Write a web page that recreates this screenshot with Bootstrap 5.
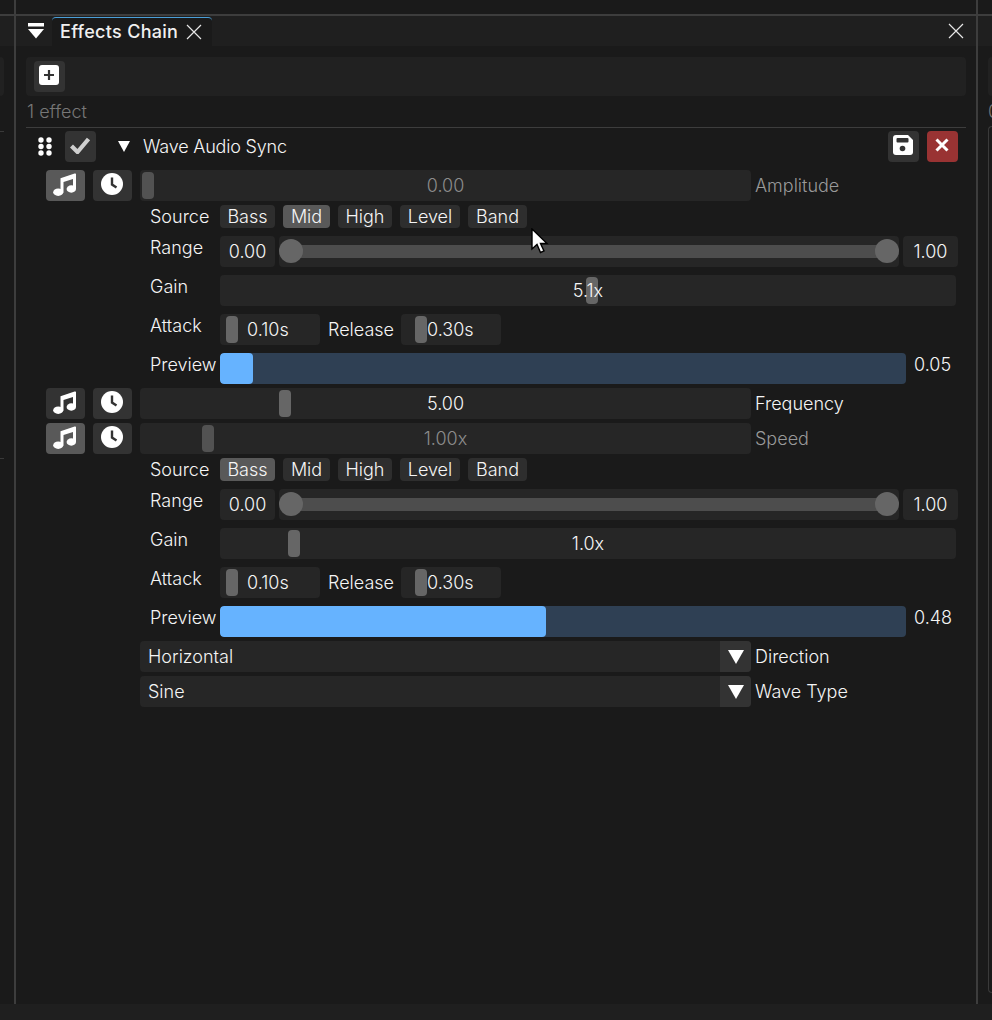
<!DOCTYPE html>
<html lang="en">
<head>
<meta charset="UTF-8">
<title>Effects Chain</title>
<link href="https://cdn.jsdelivr.net/npm/bootstrap@5.3.0/dist/css/bootstrap.min.css" rel="stylesheet">
<style>
html, body { background: #1a1a1a; }
body { font-family: Inter, "Liberation Sans", sans-serif; font-size: 18px; font-weight: 300; line-height: 22px; color: #f5f5f5; overflow: hidden; }
.shell { height: 1004px; }
.side-l { width: 14px; overflow: hidden; flex: none; }
.side-r { width: 14px; overflow: hidden; flex: none; }
.divider { width: 2px; background: #3d3d3d; flex: none; }
.center { width: 960px; flex: none; position: relative; }
.strip { height: 16px; border-bottom: 2px solid #3d3d3d; flex: none; }
.tabbar { height: 30px; background: #1f1f1f; flex: none; }
.foot { height: 16px; background: #1f1f1f; }
.side-tool { height: 39px; width: 4px; margin-top: 11px; background: #212121; border-radius: 0 4px 4px 0; }
.side-rule { height: 1px; width: 4px; background: #3a3a3a; margin-top: 35px; }
.side-rule2 { height: 1px; width: 4px; background: #3a3a3a; margin-top: 326px; }
.side-tool-r { height: 39px; width: 4px; margin-top: 11px; margin-left: 10px; background: #212121; border-radius: 4px 0 0 4px; }
.side-text { margin: 5px 0 0 10px; color: #777; white-space: nowrap; height: 22px; }
.side-box { margin: 3px 0 0 10px; height: 867px; border: 1px solid #3a3a3a; border-right: 0; border-radius: 4px 0 0 4px; }
.tab-menu { width: 16px; margin: 0 8px 0 12px; }
.tab-active { width: 160px; height: 30px; padding-left: 8px; background: #1a1a1a; border-top: 1px solid #4a9fd8; border-radius: 4px 4px 0 0; margin-top: 1px; font-weight: 500; color: #f0f0f0; letter-spacing: .3px; }
.tab-active span { width: 118px; white-space: nowrap; }
.tool-bar { height: 39px; margin: 11px 10px 0; padding: 4px 8px; background: #212121; border-radius: 4px; }
.count { color: #777; margin: 5px 0 0 11px; height: 22px; }
.rule-line { height: 1px; background: #3d3d3d; margin: 4px 10px 0; }
.fx-body { padding: 3px 10px 0; }
.fx-btn { width: 31px; height: 31px; padding: 0 2px 3px 0; border: 0; background: #333; display: flex; align-items: center; justify-content: center; }
.fx-btn:hover { background: #333; }
.fx-btn.danger, .fx-btn.danger:hover { background: #993333; }
.mod-btn { width: 39px; height: 31px; padding: 0 2px 3px 0; border: 0; background: #333; display: flex; align-items: center; justify-content: center; flex: none; }
.mod-btn:hover { background: #333; }
.mod-btn.on, .mod-btn.on:hover { background: #595959; }
.fx-head { height: 31px; }
.grip { width: 14px; margin-left: 12px; margin-right: 13px; }
.fold { margin: 0 13px 0 22px; }
.fx-name { letter-spacing: -.2px; }
.fx-row { height: 31px; margin-left: 20px; margin-top: 4px; gap: 8px; }
.sl { position: relative; background: #262626; border-radius: 4px; height: 31px; display: flex; align-items: center; justify-content: center; }
.sl-main { width: 611px; flex: none; }
.sl-label { margin-left: -4px; white-space: nowrap; }
.dim { color: #8c8c8c; }
.dim-label { color: #999; }
.knob { position: absolute; top: 2px; width: 12px; height: 27px; background: #666; border-radius: 4px; }
.knob.off { background: #525252; }
.sl span { position: relative; }
.sub { margin-left: 124px; margin-top: 8px; height: 31px; }
.sub.first { margin-top: 4px; height: 23px; align-items: center; }
.sub-label { width: 70px; flex: none; white-space: nowrap; padding-top: 1px; }
.src-btn { height: 23px; padding: 0; background: #2e2e2e; border: 0; border-radius: 4px; color: #f5f5f5; font-size: 18px; font-weight: 300; line-height: 24px; }
.src-btn:hover { background: #2e2e2e; color: #f5f5f5; }
.src-btn.on, .src-btn.on:hover { background: #595959; }
.w-bass { width: 55px; }
.w-mid { width: 47px; }
.w-high { width: 54px; }
.w-level { width: 60px; }
.w-band { width: 59px; }
.val-box { width: 55px; flex: none; padding: 0; }
.range-track { width: 620px; flex: none; margin: 0 4px; }
.range-fill { position: absolute; left: 12px; right: 12px; top: 9px; height: 13px; background: #4d4d4d; }
.range-dot { position: absolute; top: 3px; width: 24px; height: 24px; border-radius: 50%; background: #666; }
.gain { width: 736px; flex: none; }
.timing { width: 100px; flex: none; padding-left: 27px; justify-content: flex-start; }
.timing .knob { left: 6px; }
.timing.rel { padding-left: 26px; }
.timing.rel .knob { left: 14px; }
.rel-label { margin: 0 8px 0 8px; width: 65px; white-space: nowrap; padding-top: 5px; }
.meter { width: 686px; height: 31px; background: #2f4054; border-radius: 4px; overflow: hidden; flex: none; }
.meter-fill { height: 31px; background: #66b3ff; border-radius: 4px; }
.meter-val { margin-left: 8px; padding-top: 1px; }
.drop { width: 611px; height: 31px; background: #262626; border-radius: 4px; overflow: hidden; flex: none; padding-left: 8px; }
.drop-arrow { width: 31px; height: 31px; background: #333; margin-left: auto; }
.sel-row { margin-left: 114px; margin-top: 4px; height: 31px; gap: 4px; }
.cursor-mark { position: absolute; left: 515px; top: 228px; z-index: 5; }
</style>
</head>
<body>
<div class="shell d-flex">
  <div class="side-l d-flex flex-column">
    <div class="strip"></div>
    <div class="tabbar"></div>
    <div class="side-tool"></div>
    <div class="side-rule"></div>
    <div class="side-rule2"></div>
  </div>
  <div class="divider"></div>
  <div class="center d-flex flex-column">
    <div class="strip"></div>
    <div class="tabbar d-flex align-items-center">
      <svg class="tab-menu" viewBox="0 0 16 16" height="16"><rect x="0" y="0" width="16" height="3.5" fill="#fff"/><path d="M0 6h16l-8 9.5z" fill="#fff"/></svg>
      <div class="tab-active d-flex align-items-center">
        <span>Effects Chain</span>
        <svg class="ms-2" width="16" height="16" viewBox="0 0 16 16"><path d="M1 1l14 14M15 1L1 15" stroke="#e6e6e6" stroke-width="1.2"/></svg>
      </div>
      <svg class="ms-auto" style="margin-right:12px" width="16" height="16" viewBox="0 0 16 16"><path d="M1 1l14 14M15 1L1 15" stroke="#e6e6e6" stroke-width="1.2"/></svg>
    </div>
    <div class="tool-bar">
      <button class="btn fx-btn rounded-1" type="button" aria-label="Add effect">
        <svg width="20" height="20" viewBox="0 0 20 20"><rect width="20" height="20" rx="3" fill="#fff"/><path d="M10 5v10M5 10h10" stroke="#333" stroke-width="2.2"/></svg>
      </button>
    </div>
    <div class="count">1 effect</div>
    <div class="rule-line"></div>
    <div class="fx-body">
      <div class="fx-head d-flex align-items-center">
        <svg class="grip" width="14" height="19" viewBox="0 0 14 19" fill="#fff"><circle cx="3" cy="3" r="2.7"/><circle cx="11" cy="3" r="2.7"/><circle cx="3" cy="9.5" r="2.7"/><circle cx="11" cy="9.5" r="2.7"/><circle cx="3" cy="16" r="2.7"/><circle cx="11" cy="16" r="2.7"/></svg>
        <button class="btn fx-btn rounded-1" type="button" aria-label="Enabled">
          <svg width="22" height="18" viewBox="0 0 22 18"><path d="M2.5 10l6 6L19.5 3" fill="none" stroke="#cfcfcf" stroke-width="4.2"/></svg>
        </button>
        <svg class="fold" width="12" height="11" viewBox="0 0 12 11"><path d="M0 0h12L6 11z" fill="#fff"/></svg>
        <span class="fx-name">Wave Audio Sync</span>
        <button class="btn fx-btn rounded-1 ms-auto" type="button" aria-label="Save">
          <svg width="20" height="20" viewBox="0 0 20 20"><path d="M3 0h12l5 5v12a3 3 0 0 1-3 3H3a3 3 0 0 1-3-3V3a3 3 0 0 1 3-3z" fill="#fff"/><rect x="3.5" y="3" width="12" height="4.5" rx="1" fill="#333"/><circle cx="9.5" cy="13.5" r="2.8" fill="#333"/></svg>
        </button>
        <button class="btn fx-btn danger rounded-1" style="margin:0 8px" type="button" aria-label="Delete">
          <svg width="14" height="14" viewBox="0 0 14 14"><path d="M1.5 1.5l11 11M12.5 1.5l-11 11" stroke="#fff" stroke-width="3"/></svg>
        </button>
      </div>

      <div class="fx-row d-flex" style="margin-top:8px">
        <button class="btn mod-btn on rounded-1" type="button" aria-label="Audio"><svg width="23" height="23" viewBox="0 0 23 23"><use href="#i-music"/></svg></button>
        <button class="btn mod-btn rounded-1" type="button" aria-label="Time"><svg width="22" height="22" viewBox="0 0 22 22"><use href="#i-clock"/></svg></button>
        <div class="sl sl-main"><div class="knob off" style="left:2px"></div><span class="dim">0.00</span></div>
        <div class="sl-label align-self-center dim-label">Amplitude</div>
      </div>

      <div class="sub first d-flex">
        <div class="sub-label">Source</div>
        <div class="d-flex gap-2">
          <button class="btn src-btn w-bass" type="button">Bass</button>
          <button class="btn src-btn w-mid on" type="button">Mid</button>
          <button class="btn src-btn w-high" type="button">High</button>
          <button class="btn src-btn w-level" type="button">Level</button>
          <button class="btn src-btn w-band" type="button">Band</button>
        </div>
      </div>
      <div class="sub d-flex">
        <div class="sub-label">Range</div>
        <div class="sl val-box"><span>0.00</span></div>
        <div class="sl range-track"><div class="range-fill"></div><div class="range-dot" style="left:0"></div><div class="range-dot" style="right:0"></div></div>
        <div class="sl val-box"><span>1.00</span></div>
      </div>
      <div class="sub d-flex">
        <div class="sub-label">Gain</div>
        <div class="sl gain"><div class="knob" style="left:366px"></div><span>5.1x</span></div>
      </div>
      <div class="sub d-flex">
        <div class="sub-label">Attack</div>
        <div class="sl timing"><div class="knob"></div><span>0.10s</span></div>
        <div class="rel-label">Release</div>
        <div class="sl timing rel"><div class="knob"></div><span>0.30s</span></div>
      </div>
      <div class="sub d-flex">
        <div class="sub-label">Preview</div>
        <div class="meter"><div class="meter-fill" style="width:33px"></div></div>
        <div class="meter-val">0.05</div>
      </div>

      <div class="fx-row d-flex">
        <button class="btn mod-btn rounded-1" type="button" aria-label="Audio"><svg width="23" height="23" viewBox="0 0 23 23"><use href="#i-music"/></svg></button>
        <button class="btn mod-btn rounded-1" type="button" aria-label="Time"><svg width="22" height="22" viewBox="0 0 22 22"><use href="#i-clock"/></svg></button>
        <div class="sl sl-main"><div class="knob" style="left:139px"></div><span>5.00</span></div>
        <div class="sl-label align-self-center">Frequency</div>
      </div>

      <div class="fx-row d-flex">
        <button class="btn mod-btn on rounded-1" type="button" aria-label="Audio"><svg width="23" height="23" viewBox="0 0 23 23"><use href="#i-music"/></svg></button>
        <button class="btn mod-btn rounded-1" type="button" aria-label="Time"><svg width="22" height="22" viewBox="0 0 22 22"><use href="#i-clock"/></svg></button>
        <div class="sl sl-main"><div class="knob off" style="left:62px"></div><span class="dim">1.00x</span></div>
        <div class="sl-label align-self-center dim-label">Speed</div>
      </div>

      <div class="sub first d-flex">
        <div class="sub-label">Source</div>
        <div class="d-flex gap-2">
          <button class="btn src-btn w-bass on" type="button">Bass</button>
          <button class="btn src-btn w-mid" type="button">Mid</button>
          <button class="btn src-btn w-high" type="button">High</button>
          <button class="btn src-btn w-level" type="button">Level</button>
          <button class="btn src-btn w-band" type="button">Band</button>
        </div>
      </div>
      <div class="sub d-flex">
        <div class="sub-label">Range</div>
        <div class="sl val-box"><span>0.00</span></div>
        <div class="sl range-track"><div class="range-fill"></div><div class="range-dot" style="left:0"></div><div class="range-dot" style="right:0"></div></div>
        <div class="sl val-box"><span>1.00</span></div>
      </div>
      <div class="sub d-flex">
        <div class="sub-label">Gain</div>
        <div class="sl gain"><div class="knob" style="left:68px"></div><span>1.0x</span></div>
      </div>
      <div class="sub d-flex">
        <div class="sub-label">Attack</div>
        <div class="sl timing"><div class="knob"></div><span>0.10s</span></div>
        <div class="rel-label">Release</div>
        <div class="sl timing rel"><div class="knob"></div><span>0.30s</span></div>
      </div>
      <div class="sub d-flex">
        <div class="sub-label">Preview</div>
        <div class="meter"><div class="meter-fill" style="width:326px"></div></div>
        <div class="meter-val">0.48</div>
      </div>

      <div class="sel-row d-flex align-items-center">
        <div class="drop d-flex align-items-center"><span>Horizontal</span><div class="drop-arrow d-flex align-items-center justify-content-center"><svg width="16" height="14" viewBox="0 0 16 14"><path d="M0 0h16L8 14z" fill="#fff"/></svg></div></div>
        <div>Direction</div>
      </div>
      <div class="sel-row d-flex align-items-center">
        <div class="drop d-flex align-items-center"><span>Sine</span><div class="drop-arrow d-flex align-items-center justify-content-center"><svg width="16" height="14" viewBox="0 0 16 14"><path d="M0 0h16L8 14z" fill="#fff"/></svg></div></div>
        <div>Wave Type</div>
      </div>
    </div>
    <svg class="cursor-mark" width="18" height="27" viewBox="0 0 18 27"><path d="M1 1v20l5-4.5 3.5 8 3.5-1.5-3.5-7.5H16z" fill="#fff" stroke="#000" stroke-width="1.4"/></svg>
  </div>
  <div class="divider"></div>
  <div class="side-r d-flex flex-column">
    <div class="strip"></div>
    <div class="tabbar"></div>
    <div class="side-tool-r"></div>
    <div class="side-text">0</div>
    <div class="side-box"></div>
  </div>
</div>
<div class="foot"></div>

<svg width="0" height="0" class="position-absolute">
  <defs>
    <g id="i-music" fill="#fff">
      <path d="M7.5 5.2L21.6.6A1 1 0 0 1 23 1.6V16h-3V6L10.5 9v10.5h-3z"/>
      <ellipse cx="5.2" cy="19.2" rx="5" ry="3.7"/>
      <ellipse cx="18.3" cy="16" rx="4.7" ry="3.7"/>
    </g>
    <g id="i-clock">
      <circle cx="11" cy="11" r="11" fill="#fff"/>
      <path d="M11 4.5V11.5l4.5 3" fill="none" stroke="#333" stroke-width="2.4"/>
    </g>
  </defs>
</svg>
<script src="https://cdn.jsdelivr.net/npm/bootstrap@5.3.0/dist/js/bootstrap.bundle.min.js"></script>
</body>
</html>
